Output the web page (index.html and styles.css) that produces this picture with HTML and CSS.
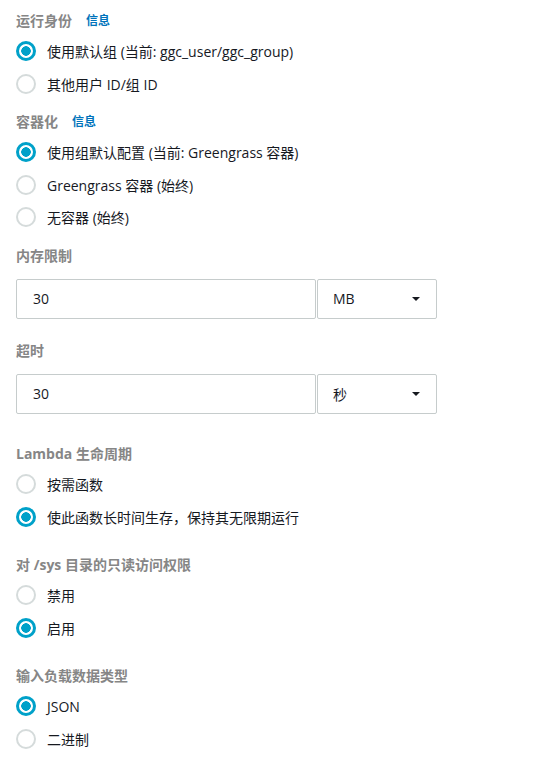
FILE: index.html
```html
<!DOCTYPE html>
<html lang="zh-CN">
<head>
<meta charset="utf-8">
<link rel="stylesheet" href="styles.css">
</head>
<body>
<div class="form">
  <section class="group">
    <div class="label">运行身份 <a class="info">信息</a></div>
    <div class="radios">
      <label class="radio checked"><span class="dot"></span>使用默认组 (当前: ggc_user/ggc_group)</label>
      <label class="radio"><span class="dot"></span>其他用户 ID/组 ID</label>
    </div>
  </section>
  <section class="group">
    <div class="label">容器化 <a class="info">信息</a></div>
    <div class="radios">
      <label class="radio checked"><span class="dot"></span>使用组默认配置 (当前: Greengrass 容器)</label>
      <label class="radio"><span class="dot"></span>Greengrass 容器 (始终)</label>
      <label class="radio"><span class="dot"></span>无容器 (始终)</label>
    </div>
  </section>
  <section class="group field">
    <div class="label">内存限制</div>
    <div class="combo">
      <div class="input">30</div>
      <div class="select">MB<span class="caret"></span></div>
    </div>
  </section>
  <section class="group field">
    <div class="label">超时</div>
    <div class="combo">
      <div class="input">30</div>
      <div class="select">秒<span class="caret"></span></div>
    </div>
  </section>
  <section class="group wide">
    <div class="label">Lambda 生命周期</div>
    <div class="radios">
      <label class="radio"><span class="dot"></span>按需函数</label>
      <label class="radio checked"><span class="dot"></span>使此函数长时间生存，保持其无限期运行</label>
    </div>
  </section>
  <section class="group wide">
    <div class="label">对 /sys 目录的只读访问权限</div>
    <div class="radios">
      <label class="radio"><span class="dot"></span>禁用</label>
      <label class="radio checked"><span class="dot"></span>启用</label>
    </div>
  </section>
  <section class="group wide">
    <div class="label">输入负载数据类型</div>
    <div class="radios">
      <label class="radio checked"><span class="dot"></span>JSON</label>
      <label class="radio"><span class="dot"></span>二进制</label>
    </div>
  </section>
</div>
</body>
</html>
```

FILE: styles.css
```css
html, body {
  margin: 0;
  padding: 0;
  background: #ffffff;
}
body {
  font-family: "Open Sans", "Noto Sans", "Noto Sans CJK SC", sans-serif;
  font-size: 14px;
  color: #16191f;
}
.form {
  padding: 11px 16px 0 16px;
  display: flex;
  flex-direction: column;
}
.group {
  display: flex;
  flex-direction: column;
  margin-bottom: 12px;
}
.group.field {
  margin-bottom: 22px;
}
.group.field + .group.wide {
  margin-top: 8.5px;
}
.group.wide {
  margin-bottom: 22px;
}
.label {
  height: 20px;
  line-height: 20px;
  font-weight: 700;
  font-size: 14px;
  color: #868686;
  display: flex;
  align-items: center;
  gap: 14px;
}
.info {
  color: #0073bb;
  font-size: 12px;
  font-weight: 700;
}
.radios {
  display: flex;
  flex-direction: column;
  margin-top: 4px;
}
.radio {
  height: 32.5px;
  display: flex;
  align-items: center;
  gap: 11px;
  font-size: 14px;
  color: #16191f;
}
.dot {
  box-sizing: border-box;
  width: 20px;
  height: 20px;
  border-radius: 50%;
  border: 2px solid #d5dbdb;
  background: #fff;
  flex: none;
}
.radio.checked .dot {
  border: 3px solid #00a1c9;
  background: radial-gradient(circle, #00a1c9 0 4.5px, #fff 5px);
}
.field .combo {
  margin-top: 13px;
  display: flex;
  gap: 1px;
  height: 40px;
}
.input, .select {
  box-sizing: border-box;
  height: 40px;
  border: 1px solid #c6cccc;
  border-radius: 2px;
  display: flex;
  align-items: center;
  font-size: 14px;
  color: #16191f;
}
.input {
  width: 300px;
  padding-left: 16px;
}
.select {
  width: 120px;
  padding: 0 16px 0 15px;
  justify-content: space-between;
}
.caret {
  width: 0;
  height: 0;
  border-left: 4px solid transparent;
  border-right: 4px solid transparent;
  border-top: 4px solid #16191f;
}
```
